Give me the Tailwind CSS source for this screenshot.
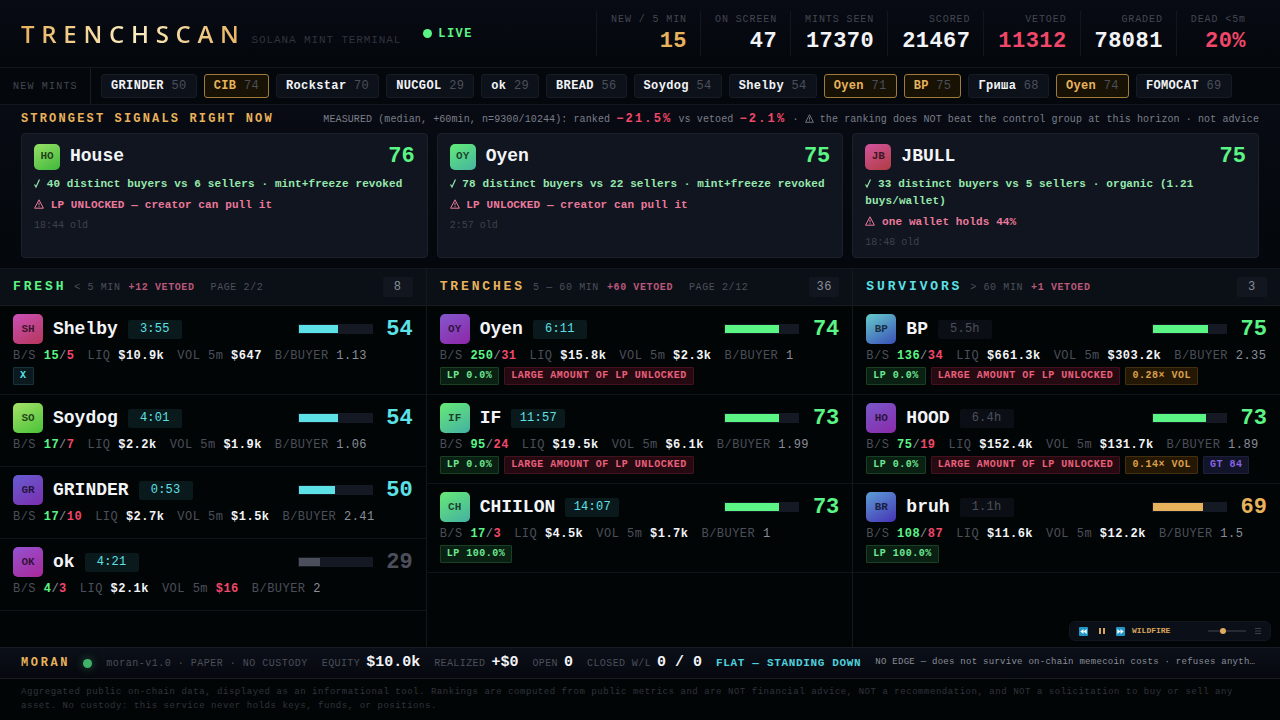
<!DOCTYPE html>
<html lang="en" class="dark">
<head>
    <meta charset="UTF-8">
    <meta name="viewport" content="width=device-width, initial-scale=1.0">
    <title>TRENCHSCAN</title>
    <script src="https://cdn.jsdelivr.net/npm/@tailwindcss/browser@4"></script>
</head>
<body class="relative min-h-screen flex flex-col bg-[#020506] text-[#f2f4f8] font-['Liberation_Mono',monospace] text-[12px]">

    <header class="flex items-center justify-between px-[21px] h-[68px] border-b border-[#12161d] bg-linear-to-b from-[#080b14] to-[#04070b]">
        <div class="flex items-center gap-[22px]">
            <div class="flex items-baseline gap-[6px]">
                <h1 class="font-['Open_Sans',sans-serif] font-semibold text-[24px] leading-[36px] tracking-[.28em] bg-linear-to-r from-[#e8b25c] via-[#fbeec2] to-[#e8b25c] bg-clip-text text-transparent">TRENCHSCAN</h1>
                <span class="text-[11px] tracking-[.08em] text-[#30343d]">SOLANA MINT TERMINAL</span>
            </div>
            <div class="flex items-center gap-[6px] text-[#5bf586]">
                <span class="size-[9px] rounded-full bg-[#5bf586]"></span>
                <span class="tracking-[.12em] font-bold">LIVE</span>
            </div>
        </div>
        <dl id="stats" class="flex"></dl>
    </header>

    <nav class="flex items-center h-[37px] border-b border-[#12161d] bg-[#04070c]" aria-label="New mints">
        <span class="self-stretch flex items-center w-[91px] pl-[13px] border-r border-[#171b22] text-[10px] tracking-[.12em] text-[#434751]">NEW MINTS</span>
        <div id="mints" class="flex gap-[7px] pl-[10px]"></div>
    </nav>

    <section class="px-[21px] pb-[10px] border-b border-[#12161d] bg-linear-to-b from-[#080b13] to-[#04070b]">
        <div class="flex items-center justify-between h-[28px]">
            <h2 class="text-[12px] font-bold tracking-[.18em] text-[#e8b25c]">STRONGEST SIGNALS RIGHT NOW</h2>
            <p class="text-[10px] tracking-[.01em] text-[#7b7f8a] whitespace-nowrap">MEASURED (median, +60min, n=9300/10244): ranked <b class="text-[12px] tracking-[.18em] text-[#f0476a]">−21.5%</b> vs vetoed <b class="text-[12px] tracking-[.18em] text-[#f0476a]">−2.1%</b> · <svg class="inline size-[9px] align-[-1px]" viewBox="0 0 10 10" fill="none" stroke="currentColor"><path d="M5 .8 9.4 9.2H.6ZM5 3.6v2.8M5 7.2v1"/></svg> the ranking does NOT beat the control group at this horizon · not advice</p>
        </div>
        <div id="signals" class="grid grid-cols-3 gap-[9px]"></div>
    </section>

    <main id="columns" class="flex-1 grid grid-cols-3"></main>

    <div class="flex items-center h-[32px] px-[21px] border-y border-[#181c24] bg-linear-to-b from-[#0c1019] to-[#06080e] whitespace-nowrap">
        <strong class="text-[12px] tracking-[.22em] text-[#e8b25c]">MORAN</strong>
        <span class="size-[9px] shrink-0 ml-[13px] rounded-full bg-[#40b56a] shadow-[0_0_8px_#40b56a80]"></span>
        <span class="ml-[14px] text-[10px] tracking-[.05em] text-[#4b4f5a]">moran-v1.0 · PAPER · NO CUSTODY</span>
        <dl class="flex gap-[14px] ml-[14px]">
            <div class="flex items-baseline gap-[6px]"><dt class="text-[10px] tracking-[.04em] text-[#4b4f5a]">EQUITY</dt><dd class="text-[15px] font-bold">$10.0k</dd></div>
            <div class="flex items-baseline gap-[6px]"><dt class="text-[10px] tracking-[.04em] text-[#4b4f5a]">REALIZED</dt><dd class="text-[15px] font-bold">+$0</dd></div>
            <div class="flex items-baseline gap-[6px]"><dt class="text-[10px] tracking-[.04em] text-[#4b4f5a]">OPEN</dt><dd class="text-[15px] font-bold">0</dd></div>
            <div class="flex items-baseline gap-[6px]"><dt class="text-[10px] tracking-[.04em] text-[#4b4f5a]">CLOSED W/L</dt><dd class="text-[15px] font-bold">0 / 0</dd></div>
        </dl>
        <strong class="ml-[14px] text-[11px] tracking-[.06em] text-[#4fd0dc]">FLAT — STANDING DOWN</strong>
        <span class="ml-[14px] text-[9px] tracking-[.03em] text-[#8a8e98]">NO EDGE — does not survive on-chain memecoin costs · refuses anyth…</span>
    </div>

    <footer class="px-[21px] pt-[6px] pb-[7px] text-[9px] leading-[14px] tracking-[.06em] text-[#30343c]">
        Aggregated public on-chain data, displayed as an informational tool. Rankings are computed from public metrics and are NOT financial advice, NOT a recommendation, and NOT a solicitation to buy or sell any asset. No custody: this service never holds keys, funds, or positions.
    </footer>

    <!-- music player, floats over the columns -->
    <div class="fixed right-[9px] bottom-[79px] flex items-center w-[202px] h-[20px] px-[9px] rounded-md border border-[#12161f] bg-[#0b0f18] text-[#d9a55a]">
        <button aria-label="Previous track"><svg class="size-[9px]" viewBox="0 0 9 9"><rect width="9" height="9" rx="1" fill="#2196c4"/><path d="M4.5 2v5L1.3 4.500ZM7.700 2v5L4.500 4.500Z" fill="#fff"/></svg></button>
        <button class="ml-[10px]" aria-label="Pause"><svg class="size-[8px]" viewBox="0 0 8 8" fill="currentColor"><path d="M1 1h2v6H1zM5 1h2v6H5z"/></svg></button>
        <button class="ml-[10px]" aria-label="Next track"><svg class="size-[9px]" viewBox="0 0 9 9"><rect width="9" height="9" rx="1" fill="#2196c4"/><path d="M1.300 2v5l3.200-2.500ZM4.500 2v5l3.200-2.500Z" fill="#fff"/></svg></button>
        <span class="ml-[7px] text-[8px] font-bold">WILDFIRE</span>
        <input type="range" min="0" max="100" value="36" aria-label="Volume" class="ml-auto w-[38px] h-[6px] appearance-none bg-transparent [&::-webkit-slider-runnable-track]:h-[2px] [&::-webkit-slider-runnable-track]:bg-[#252a33] [&::-webkit-slider-thumb]:appearance-none [&::-webkit-slider-thumb]:size-[6px] [&::-webkit-slider-thumb]:-mt-[2px] [&::-webkit-slider-thumb]:rounded-full [&::-webkit-slider-thumb]:bg-[#e0ab60]">
        <button class="ml-[9px] text-[#3a3e48]" aria-label="Playlist"><svg class="size-[6px]" viewBox="0 0 6 6" stroke="currentColor"><path d="M0 .5h6M0 3h6M0 5.500h6"/></svg></button>
    </div>

    <script>
        const stats = [
            ['NEW / 5 MIN', '15', 'text-[#e8b25c]'],
            ['ON SCREEN', '47', ''],
            ['MINTS SEEN', '17370', ''],
            ['SCORED', '21467', ''],
            ['VETOED', '11312', 'text-[#f0476a]'],
            ['GRADED', '78081', ''],
            ['DEAD &lt;5m', '20%', 'text-[#f0476a]'],
        ];

        const mints = [
            ['GRINDER', 50], ['CIB', 74, true], ['Rockstar', 70], ['NUCGOL', 29], ['ok', 29], ['BREAD', 56], ['Soydog', 54],
            ['Shelby', 54], ['Oyen', 71, true], ['BP', 75, true], ['Гриша', 68], ['Oyen', 74, true], ['FOMOCAT', 69],
        ];

        const signals = [
            { name: 'House', score: 76, from: '#97e066', to: '#3fb83c', good: '40 distinct buyers vs 6 sellers · mint+freeze revoked', bad: 'LP UNLOCKED — creator can pull it', age: '18:44' },
            { name: 'Oyen', score: 75, from: '#62ea78', to: '#46b4a0', good: '78 distinct buyers vs 22 sellers · mint+freeze revoked', bad: 'LP UNLOCKED — creator can pull it', age: '2:57' },
            { name: 'JBULL', score: 75, from: '#d2549f', to: '#b03c40', good: '33 distinct buyers vs 5 sellers · organic (1.21 buys/wallet)', bad: 'one wallet holds 44%', age: '18:48' },
        ];

        const LOCK = ['LARGE AMOUNT OF LP UNLOCKED', 'red'];
        const columns = [
            {
                title: 'FRESH', color: 'text-[#5bf586]', range: '&lt; 5 MIN', vetoed: 12, page: '2/2', count: 8,
                rows: [
                    { name: 'Shelby', age: '3:55', score: 54, from: '#cc50b8', to: '#b4365a', buys: 15, sells: 5, liq: '$10.9k', vol: '$647', per: '1.13', tags: [['X', 'cyan']] },
                    { name: 'Soydog', age: '4:01', score: 54, from: '#a6e268', to: '#48c238', buys: 17, sells: 7, liq: '$2.2k', vol: '$1.9k', per: '1.06', tags: [] },
                    { name: 'GRINDER', age: '0:53', score: 50, from: '#665cd2', to: '#7c2eae', buys: 17, sells: 10, liq: '$2.7k', vol: '$1.5k', per: '2.41', tags: [] },
                    { name: 'ok', age: '4:21', score: 29, from: '#9452d2', to: '#aa2898', buys: 4, sells: 3, liq: '$2.1k', vol: '$16', volBad: true, per: '2', tags: [] },
                ],
            },
            {
                title: 'TRENCHES', color: 'text-[#e8b25c]', range: '5 — 60 MIN', vetoed: 60, page: '2/12', count: 36,
                rows: [
                    { name: 'Oyen', age: '6:11', score: 74, from: '#8458cc', to: '#8e26a8', buys: 250, sells: 31, liq: '$15.8k', vol: '$2.3k', per: '1', tags: [['LP 0.0%', 'green'], LOCK] },
                    { name: 'IF', age: '11:57', score: 73, from: '#66ea76', to: '#44b0a2', buys: 95, sells: 24, liq: '$19.5k', vol: '$6.1k', per: '1.99', tags: [['LP 0.0%', 'green'], LOCK] },
                    { name: 'CHIILON', age: '14:07', score: 73, from: '#66ea76', to: '#44b0a2', buys: 17, sells: 3, liq: '$4.5k', vol: '$1.7k', per: '1', tags: [['LP 100.0%', 'green']] },
                ],
            },
            {
                title: 'SURVIVORS', color: 'text-[#5ce1e6]', range: '&gt; 60 MIN', vetoed: 1, count: 3,
                rows: [
                    { name: 'BP', age: '5.5h', old: true, score: 75, from: '#66cccc', to: '#3a4eb8', buys: 136, sells: 34, liq: '$661.3k', vol: '$303.2k', per: '2.35', tags: [['LP 0.0%', 'green'], LOCK, ['0.28× VOL', 'gold']] },
                    { name: 'HOOD', age: '6.4h', old: true, score: 73, from: '#7858cc', to: '#8a2aa8', buys: 75, sells: 19, liq: '$152.4k', vol: '$131.7k', per: '1.89', tags: [['LP 0.0%', 'green'], LOCK, ['0.14× VOL', 'gold'], ['GT 84', 'violet']] },
                    { name: 'bruh', age: '1.1h', old: true, score: 69, from: '#5c9ed6', to: '#4632b4', buys: 108, sells: 87, liq: '$11.6k', vol: '$12.2k', per: '1.5', tags: [['LP 100.0%', 'green']] },
                ],
            },
        ];

        const tagColors = {
            cyan: 'text-[#5ce1e6] bg-[#0a1a1e] border-[#16343a]',
            green: 'text-[#6fe892] bg-[#0a2012] border-[#184024]',
            red: 'text-[#e8607c] bg-[#260a12] border-[#42121e]',
            gold: 'text-[#dba04c] bg-[#241805] border-[#42300e]',
            violet: 'text-[#8a62e0] bg-[#12152a] border-[#1d2038]',
        };

        function scoreColor(score) {
            if (score >= 70) return ['text-[#5bf586]', 'bg-[#5bf586]'];
            if (score >= 60) return ['text-[#e8b25c]', 'bg-[#e8b25c]'];
            if (score >= 50) return ['text-[#5ce1e6]', 'bg-[#5ce1e6]'];
            return ['text-[#4b4f5c]', 'bg-[#4b4f5c]'];
        }

        function avatar(item, size) {
            return `<span class="${size} shrink-0 flex items-center justify-center rounded-[5px] text-[11px] font-bold text-black/70" style="background:linear-gradient(150deg, ${item.from}, ${item.to})">${item.name.slice(0, 2).toUpperCase()}</span>`;
        }

        const check = `<svg class="inline w-[6px] h-[9px] align-[-1px]" viewBox="0 0 6 9" fill="none" stroke="currentColor" stroke-width="1.2"><path d="M.5 5.500 2 8 5.500.500"/></svg>`;
        const warn = `<svg class="inline size-[10px] align-[-1px]" viewBox="0 0 10 10" fill="none" stroke="currentColor"><path d="M5 .8 9.400 9.200H.600ZM5 3.600v2.800M5 7.200v1"/></svg>`;

        document.getElementById('stats').innerHTML = stats.map(([label, value, color]) => `
            <div class="pl-[14px] pr-[13px] h-[45px] border-l border-[#12161d] text-right">
                <dt class="text-[10px] leading-[17px] tracking-[.09em] text-[#434751]">${label}</dt>
                <dd class="text-[22px] leading-[28px] tracking-[.02em] font-bold ${color}">${value}</dd>
            </div>`).join('');

        document.getElementById('mints').innerHTML = mints.map(([name, score, hot]) => `
            <button class="h-[24px] px-[9px] rounded-[3px] border tracking-[.03em] whitespace-pre ${hot ? 'border-[#a07c3a] bg-[#171204] text-[#e8b25c]' : 'border-[#171c24] bg-[#0d121a]'}"><b>${name}</b> <span class="text-[#4b4f5a]">${score}</span></button>`).join('');

        document.getElementById('signals').innerHTML = signals.map(s => `
            <article class="min-h-[125px] px-[12px] pt-[9px] pb-[6px] rounded-[4px] border border-[#1b202a] bg-[#11151f]">
                <div class="flex items-center gap-[10px] h-[27px]">
                    ${avatar(s, 'size-[26px]')}
                    <h3 class="text-[18px] font-bold">${s.name}</h3>
                    <span class="ml-auto text-[22px] font-bold text-[#5bf586]">${s.score}</span>
                </div>
                <p class="mt-[6px] text-[11px] leading-[17px] tracking-[.01em] font-bold text-[#97e8ae]">${check} ${s.good}</p>
                <p class="mt-[4px] text-[11px] leading-[17px] tracking-[.01em] font-bold text-[#ea7a9c]">${warn} ${s.bad}</p>
                <p class="mt-[3px] text-[10px] leading-[17px] text-[#3e424d]">${s.age} old</p>
            </article>`).join('');

        function row(r) {
            const [text, fill] = scoreColor(r.score);
            return `
            <li class="px-[13px] pt-[8px] pb-[9px] border-b border-[#0f1417]">
                <div class="flex items-center gap-[10px] h-[30px]">
                    ${avatar(r, 'size-[30px]')}
                    <h3 class="text-[18px] font-bold">${r.name}</h3>
                    <span class="min-w-[54px] h-[19px] leading-[19px] rounded-[2px] text-center tracking-[.02em] ${r.old ? 'bg-[#0b0f15] text-[#4b4f5a]' : 'bg-[#0a191b] text-[#5ce1e6]'}">${r.age}</span>
                    <span class="ml-auto w-[75px] h-[10px] border border-[#151924] bg-[#151924]"><span class="block h-full ${fill}" style="width:${r.score}%"></span></span>
                    <span class="w-[30px] text-right text-[22px] font-bold ${text}">${r.score}</span>
                </div>
                <p class="flex gap-[13px] mt-[2px] leading-[20px] tracking-[.04em] text-[#4b4f5a] whitespace-nowrap overflow-hidden">
                    <span>B/S <b class="text-[#5bf586]">${r.buys}</b><span class="text-[#8a8e98]">/</span><b class="text-[#f0476a]">${r.sells}</b></span>
                    <span>LIQ <b class="text-[#f2f4f8]">${r.liq}</b></span>
                    <span>VOL 5m <b class="${r.volBad ? 'text-[#f0476a]' : 'text-[#f2f4f8]'}">${r.vol}</b></span>
                    <span>B/BUYER <span class="text-[#8a8e98]">${r.per}</span></span>
                </p>
                <div class="flex gap-[5px] mt-px min-h-px">
                    ${r.tags.map(([label, color]) => `<span class="h-[18px] px-[6px] leading-[16px] rounded-[1px] border text-[10px] tracking-[.05em] font-bold whitespace-nowrap ${tagColors[color]}">${label}</span>`).join('')}
                </div>
            </li>`;
        }

        document.getElementById('columns').innerHTML = columns.map(c => `
            <section class="min-w-0 border-r border-[#13181c] last:border-r-0">
                <div class="flex items-center h-[37px] px-[13px] border-b border-[#171b22] bg-[#0b0f16] text-[10px] tracking-[.06em] text-[#4b4f5a]">
                    <h2 class="text-[13px] font-bold tracking-[.22em] ${c.color}">${c.title}</h2>
                    <span class="ml-[8px]">${c.range}</span>
                    <b class="ml-[8px] text-[#b8587a]">+${c.vetoed} VETOED</b>
                    ${c.page ? `<span class="ml-[16px]">PAGE ${c.page}</span>` : ''}
                    <span class="ml-auto min-w-[30px] h-[20px] leading-[20px] rounded-[2px] bg-[#11161f] text-center text-[12px] text-[#8a8e98]">${c.count}</span>
                </div>
                <ul>${c.rows.map(row).join('')}</ul>
            </section>`).join('');
    </script>
</body>
</html>
